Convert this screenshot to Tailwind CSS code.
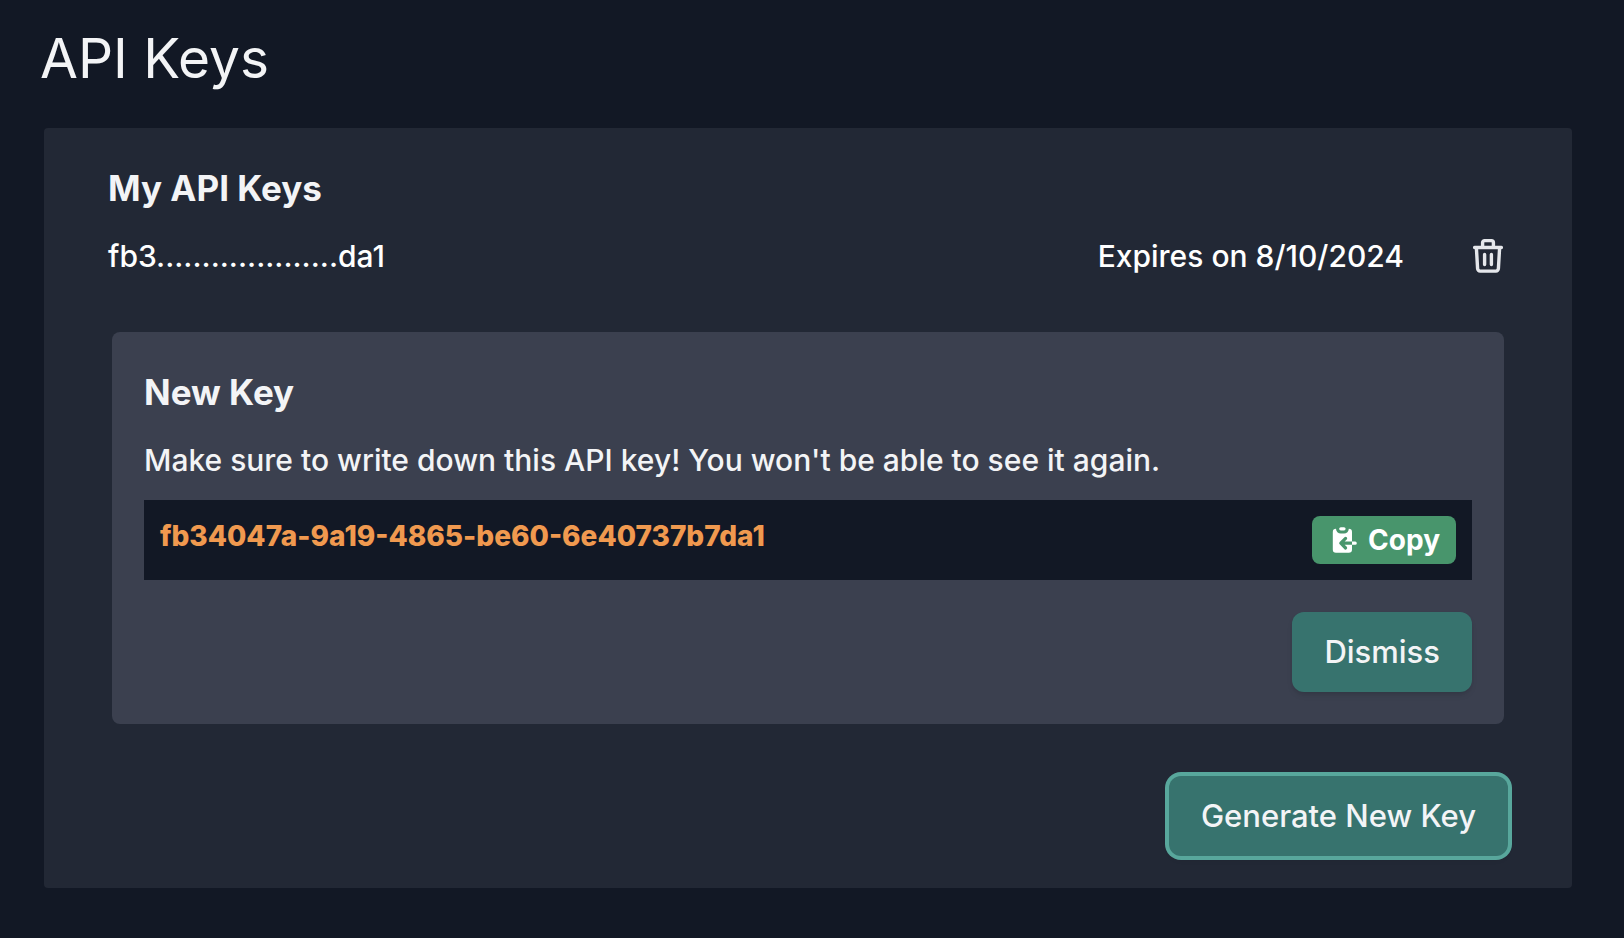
<!DOCTYPE html>
<html lang="en">
<head>
<meta charset="utf-8">
<meta name="viewport" content="width=device-width, initial-scale=1">
<title>API Keys</title>
<script src="https://cdn.jsdelivr.net/npm/@tailwindcss/browser@4"></script>
</head>
<body class="min-h-screen bg-[#121825] font-['Inter','Liberation_Sans',sans-serif] text-[#f3f4f6]">
<main class="px-10 pt-6">
  <h1 class="pt-1 text-[55px] leading-15">API Keys</h1>
  <section class="mt-10 mr-3 ml-1 rounded-sm bg-[#222835] px-16 py-8">
    <h2 class="text-[35px] leading-14 font-bold">My API Keys</h2>
    <div class="mt-4 flex h-12 items-center text-[30px] leading-12 font-medium text-white">
      <span class="grow">fb3....................da1</span>
      <span>Expires on 8/10/2024</span>
      <button type="button" aria-label="Delete key" class="ml-16 flex size-10 items-center justify-center text-[#e5e7eb]">
        <svg class="h-10 w-9" viewBox="0 0 36 40" fill="none" stroke="currentColor" stroke-width="3.400" stroke-linejoin="round" stroke-linecap="round">
          <path d="M4.600 11.500H31.400M12.600 11V6.600a2 2 0 0 1 2-2h6.800a2 2 0 0 1 2 2V11M6.400 12l1.200 20.600a2.500 2.500 0 0 0 2.500 2.500h15.800a2.500 2.500 0 0 0 2.500-2.500L29.600 12M14.600 18.500v10M21.400 18.500v10"/>
        </svg>
      </button>
    </div>
    <section class="mx-1 mt-[52px] rounded-lg bg-[#3b404f] p-8">
      <h2 class="text-[35px] leading-14 font-bold">New Key</h2>
      <p class="mt-4 text-[30px] leading-12 font-medium">Make sure to write down this API key! You won't be able to see it again.</p>
      <div class="mt-4 flex items-start justify-between bg-[#121825] p-4">
        <span class="text-[28px] leading-10 font-extrabold text-[#f0994f]">fb34047a-9a19-4865-be60-6e40737b7da1</span>
        <button type="button" class="flex h-12 items-center gap-2 rounded-lg bg-[#48956c] px-4 text-[28px] font-bold text-white">
          <svg class="size-8" viewBox="0 0 20 20" fill="currentColor" aria-hidden="true"><path d="M8 2a1 1 0 000 2h2a1 1 0 100-2H8z"/><path d="M3 5a2 2 0 012-2 3 3 0 003 3h2a3 3 0 003-3 2 2 0 012 2v6h-4.586l1.293-1.293a1 1 0 00-1.414-1.414l-3 3a1 1 0 000 1.414l3 3a1 1 0 001.414-1.414L10.414 13H15v3a2 2 0 01-2 2H5a2 2 0 01-2-2V5zM15 11h2a1 1 0 110 2h-2v-2z"/></svg>
          Copy
        </button>
      </div>
      <div class="mt-8 flex justify-end">
        <button type="button" class="h-20 rounded-xl bg-[#37736e] px-8 text-[31px] font-medium shadow-md">Dismiss</button>
      </div>
    </section>
    <div class="mt-[52px] flex justify-end">
      <button type="button" class="h-20 rounded-xl bg-[#37736e] px-8 text-[31px] font-medium shadow-md ring-4 ring-[#58a79c]">Generate New Key</button>
    </div>
  </section>
</main>
</body>
</html>
